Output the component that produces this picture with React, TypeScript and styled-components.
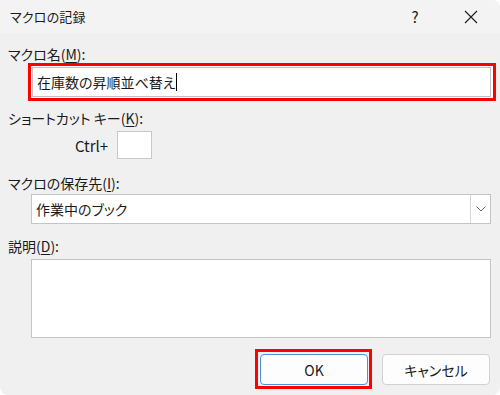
import styled, { createGlobalStyle } from "styled-components";

const GlobalStyle = createGlobalStyle`
  html, body {
    margin: 0;
    padding: 0;
    background: #ffffff;
  }
  body {
    font-family: "Noto Sans CJK JP", "Noto Sans", sans-serif;
    font-feature-settings: "palt";
    color: #1b1b1b;
  }
`;

const App = () => {
  return (
    <>
      <GlobalStyle />
      <Window>
        <TitleBar>
          <Title>マクロの記録</Title>
          <TitleButton>?</TitleButton>
          <TitleButton>
            <svg width="14" height="14" viewBox="0 0 14 14">
              <path d="M1 1 L13 13 M13 1 L1 13" stroke="#1b1b1b" strokeWidth="1.1" />
            </svg>
          </TitleButton>
        </TitleBar>

        <Body>
          <Label $top={12}>
            マクロ名(<u>M</u>):
          </Label>
          <Highlight $inset={20} $outset={5}>
            <TextBox>
              在庫数の昇順並べ替え
              <Caret />
            </TextBox>
          </Highlight>

          <Label $top={8}>
            ショートカット キー(<u>K</u>):
          </Label>
          <ShortcutRow>
            <CtrlText>Ctrl+</CtrlText>
            <KeyBox />
          </ShortcutRow>

          <Label $top={15}>
            マクロの保存先(<u>I</u>):
          </Label>
          <Combo>
            <ComboValue>作業中のブック</ComboValue>
            <ComboArrow>
              <svg width="10" height="6" viewBox="0 0 10 6">
                <path d="M0.5 0.5 L5 5 L9.5 0.5" stroke="#606060" strokeWidth="1" fill="none" />
              </svg>
            </ComboArrow>
          </Combo>

          <Label $top={13}>
            説明(<u>D</u>):
          </Label>
          <Description />

          <ButtonRow>
            <Highlight $inset={0} $pad="2px 1px 1px 2px">
              <Button $primary>OK</Button>
            </Highlight>
            <Button>キャンセル</Button>
          </ButtonRow>
        </Body>
      </Window>
    </>
  );
};

export default App;

const Window = styled.div`
  width: 500px;
  height: 395px;
  background: #f0f0f0;
  border-radius: 0 8px 8px 8px;
  overflow: hidden;
  display: flex;
  flex-direction: column;
  box-sizing: border-box;
`;

const TitleBar = styled.div`
  height: 33px;
  flex: none;
  background: #f3f3f3;
  display: flex;
  align-items: center;
  padding: 0 6px 0 10px;
  gap: 10px;
  font-size: 13px;
`;

const Title = styled.div`
  flex: 1;
  letter-spacing: 0.2px;
`;

const TitleButton = styled.div`
  width: 46px;
  height: 33px;
  display: flex;
  align-items: center;
  justify-content: center;
  font-size: 15px;
`;

const Body = styled.div`
  display: flex;
  flex-direction: column;
  padding: 0 9px 0 8px;
  font-size: 14px;
`;

const Label = styled.div<{ $top: number }>`
  margin-top: ${(p) => p.$top}px;
  height: 18px;
  line-height: 18px;

  u {
    text-underline-offset: 2px;
  }
`;

const Highlight = styled.div<{ $inset: number; $outset?: number; $pad?: string }>`
  margin-left: ${(p) => p.$inset}px;
  margin-right: ${(p) => -(p.$outset ?? 0)}px;
  border: 3px solid #ff0000;
  padding: ${(p) => p.$pad ?? "1px"};
  background: #ffffff;
`;

const TextBox = styled.div`
  height: 28px;
  border: 1px solid #c2c2c8;
  margin-right: 1px;
  background: #ffffff;
  display: flex;
  align-items: center;
  padding-left: 4px;
  font-size: 14px;
`;

const Caret = styled.span`
  display: inline-block;
  width: 1px;
  height: 18px;
  background: #000000;
  margin-left: 1px;
`;

const ShortcutRow = styled.div`
  margin-top: 4px;
  margin-left: 67px;
  display: flex;
  align-items: center;
  gap: 5px;
`;

const CtrlText = styled.span`
  font-size: 15px;
  width: 37px;
`;

const KeyBox = styled.div`
  width: 33px;
  height: 26px;
  border: 1px solid #c8c8c8;
  background: #ffffff;
`;

const Combo = styled.div`
  margin-top: 2px;
  margin-left: 23px;
  height: 28px;
  border: 1px solid #c4c4c4;
  background: #ffffff;
  display: flex;
  align-items: center;
`;

const ComboValue = styled.div`
  flex: 1;
  padding-left: 4px;
`;

const ComboArrow = styled.div`
  width: 19px;
  height: 100%;
  border-left: 1px solid #d6d6d6;
  display: flex;
  align-items: center;
  justify-content: center;
`;

const Description = styled.div`
  margin-top: 4px;
  margin-left: 23px;
  height: 77px;
  border: 1px solid #c4c4c4;
  background: #ffffff;
`;

const ButtonRow = styled.div`
  margin-top: 11px;
  display: flex;
  justify-content: flex-end;
  align-items: flex-start;
  gap: 10px;
  padding-right: 1px;

  & > div {
    background: transparent;
  }
  & > button {
    margin-top: 5px;
  }
`;

const Button = styled.button<{ $primary?: boolean }>`
  width: 108px;
  height: 31px;
  box-sizing: border-box;
  border-radius: 4px;
  background: #fdfdfd;
  border: 1px solid ${(p) => (p.$primary ? "#4c93d8" : "#d2d2d2")};
  font-family: inherit;
  font-feature-settings: "palt";
  font-size: 14px;
  color: #1b1b1b;
  padding: 0;
  display: block;
`;
